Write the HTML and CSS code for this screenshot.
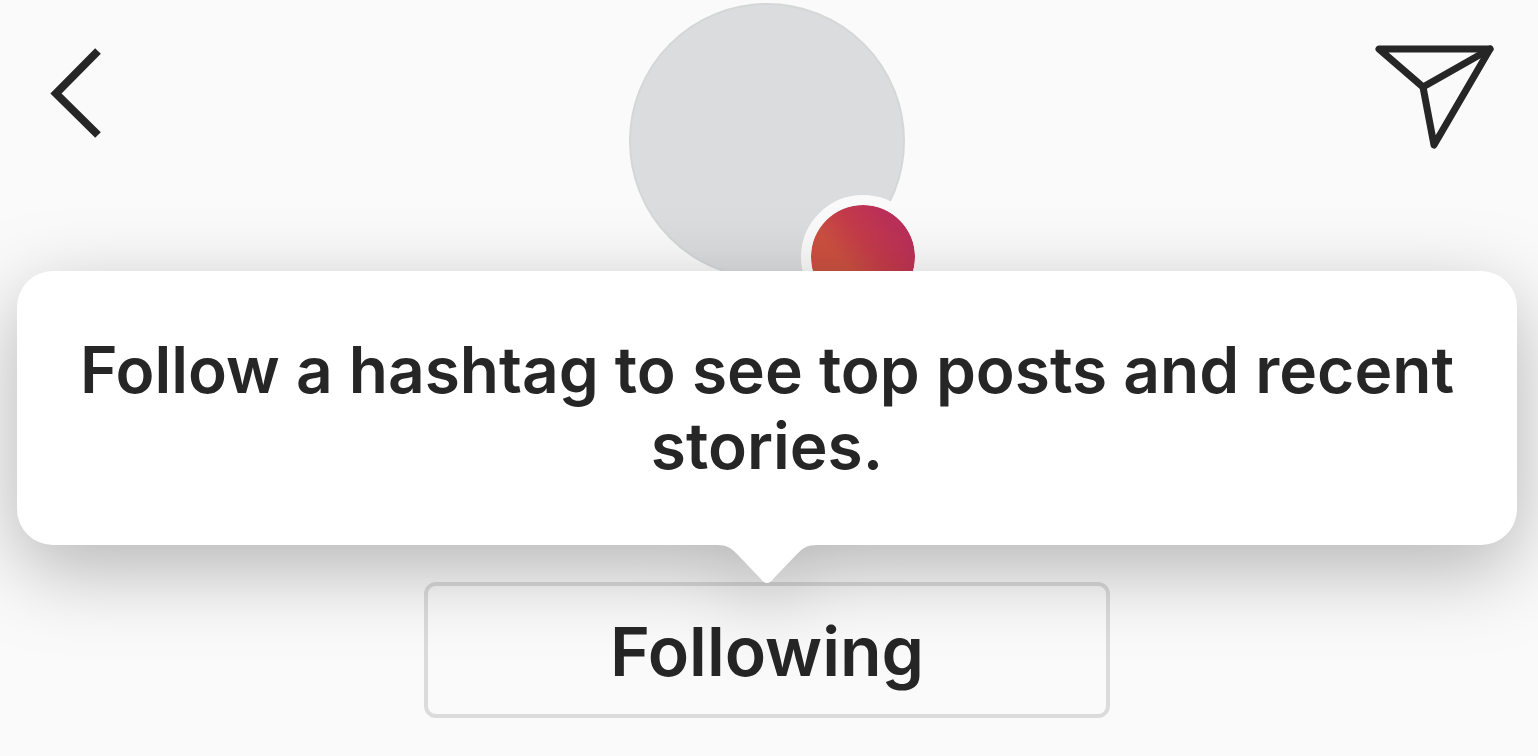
FILE: index.html
```html
<!DOCTYPE html>
<html lang="en">
<head>
    <meta charset="UTF-8">
    <meta name="viewport" content="width=device-width, initial-scale=1">
    <title>Hashtag</title>
    <link rel="stylesheet" href="styles.css">
</head>
<body>
    <header class="header">
        <button class="icon-button back" type="button" aria-label="Back">
            <svg width="68" height="100" viewBox="0 0 68 100" fill="none" stroke="currentColor" stroke-width="8">
                <path d="M61 7L19 49.500L61 91"/>
            </svg>
        </button>
        <div class="avatar">
            <span class="badge"></span>
        </div>
        <button class="icon-button send" type="button" aria-label="Share">
            <svg width="124" height="110" viewBox="0 0 124 110" fill="none" stroke="currentColor" stroke-width="7" stroke-linecap="round" stroke-linejoin="round">
                <path d="M6 5H117L61 101L50 43L6 5Z"/>
                <path d="M50 43L117 5"/>
            </svg>
        </button>
    </header>
    <main class="follow">
        <button class="follow-button" type="button" aria-describedby="follow-tip">Following</button>
        <div class="tooltip" id="follow-tip" role="tooltip">
            <p>Follow a hashtag to see top posts and recent stories.</p>
            <svg class="tooltip-arrow" width="100" height="40" viewBox="0 0 100 40" fill="#fff">
                <path d="M0 0V1C10 1 14 4 20 10L43 34Q50 44 57 34L80 10C86 4 90 1 100 1V0Z"/>
            </svg>
        </div>
    </main>
</body>
</html>
```

FILE: styles.css
```css
* {
    box-sizing: border-box;
}
body {
    font-family: Inter, "Liberation Sans", sans-serif;
    background-color: #fafafa;
    color: #262626;
    margin: 0;
    padding: 3px 21px 0 17px;
    overflow-x: hidden;
}
button {
    font: inherit;
    color: inherit;
    cursor: pointer;
}
.header {
    display: grid;
    grid-template-columns: 1fr auto 1fr;
    align-items: start;
    margin-bottom: 303px;
}
.icon-button {
    padding: 41px 20px;
    border: 0;
    background: none;
}
.icon-button svg {
    display: block;
}
.back {
    justify-self: start;
}
.send {
    justify-self: end;
}
.avatar {
    position: relative;
    width: 276px;
    height: 276px;
    border: 2px solid #d5d7d7;
    border-radius: 50%;
    background-color: #dbdcde;
}
.badge {
    position: absolute;
    right: -22px;
    bottom: -42px;
    width: 124px;
    height: 124px;
    border: 10px solid #fafafa;
    border-radius: 50%;
    background: linear-gradient(50deg, #cb5040 38%, #c43b4a 58%, #bb3058 80%, #b42d62);
    background-clip: padding-box;
}
.follow {
    position: relative;
    text-align: center;
}
.follow-button {
    width: 100%;
    max-width: 686px;
    padding: 25px 24px 23px;
    border: 4px solid #dbdbdb;
    border-radius: 12px;
    background: none;
    font-size: 68px;
    font-weight: 600;
    line-height: 80px;
}
.tooltip {
    position: absolute;
    left: 0;
    right: 0;
    bottom: 100%;
    margin-bottom: 37px;
    padding: 61px 48px;
    border-radius: 36px;
    background-color: #fff;
    filter: drop-shadow(0 24px 40px rgba(0, 0, 0, 0.28));
}
.tooltip p {
    margin: 0;
    font-size: 64px;
    font-weight: 600;
    line-height: 76px;
}
.tooltip-arrow {
    position: absolute;
    top: 100%;
    left: 50%;
    margin: -1px 0 0 -50px;
}
```
